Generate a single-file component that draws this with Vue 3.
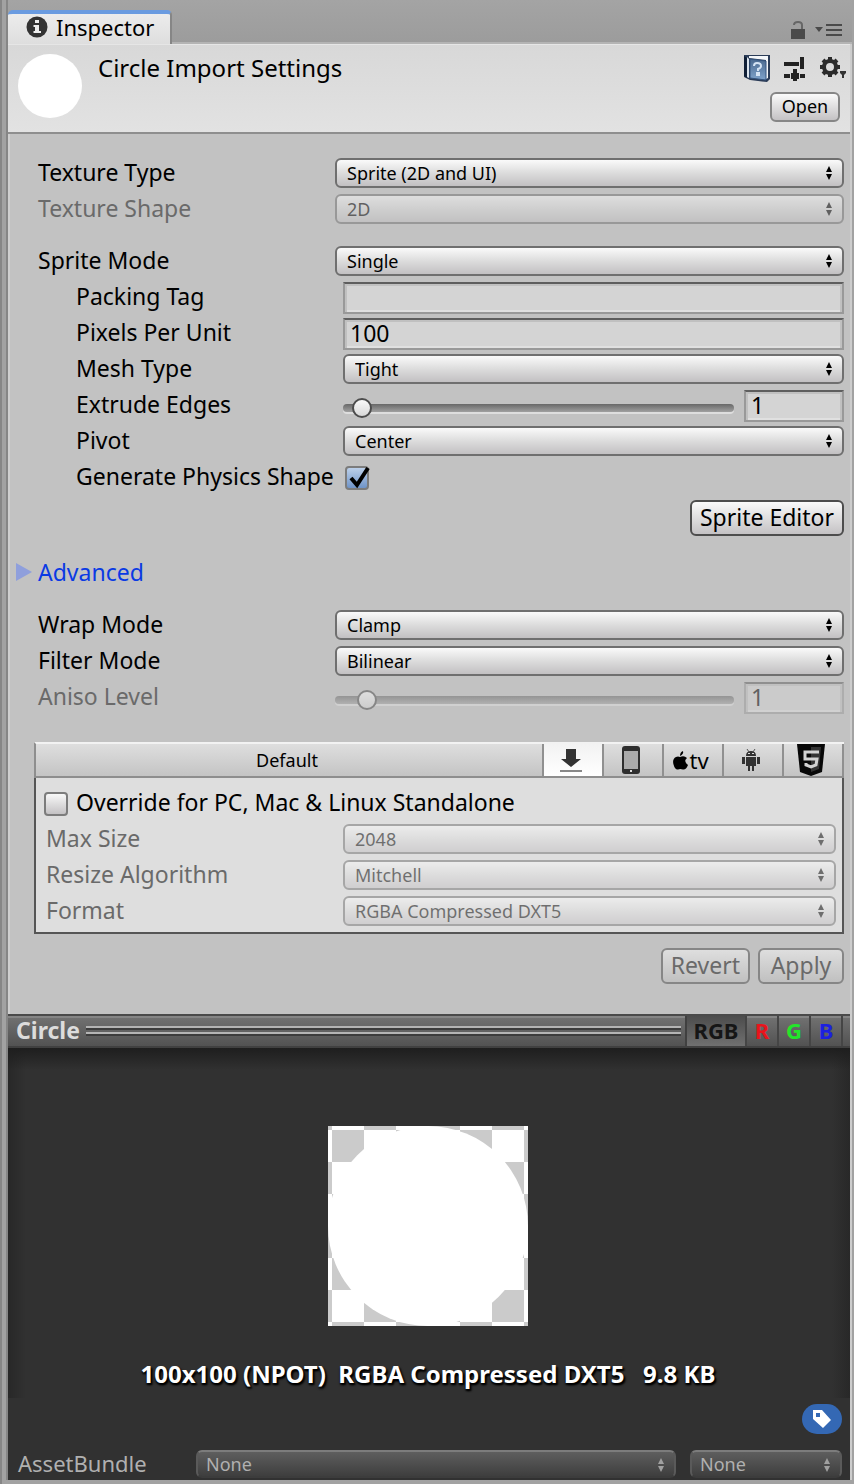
<script setup>
import { reactive, ref } from 'vue'

const groups = reactive([
  [
    { id: 'texture-type', label: 'Texture Type', kind: 'select', value: 'Sprite (2D and UI)' },
    { id: 'texture-shape', label: 'Texture Shape', kind: 'select', value: '2D', disabled: true },
  ],
  [
    { id: 'sprite-mode', label: 'Sprite Mode', kind: 'select', value: 'Single' },
    { id: 'packing-tag', label: 'Packing Tag', kind: 'text', value: '', sub: true },
    { id: 'pixels-per-unit', label: 'Pixels Per Unit', kind: 'text', value: '100', sub: true },
    { id: 'mesh-type', label: 'Mesh Type', kind: 'select', value: 'Tight', sub: true },
    { id: 'extrude-edges', label: 'Extrude Edges', kind: 'slider', value: 1, max: 42, sub: true },
    { id: 'pivot', label: 'Pivot', kind: 'select', value: 'Center', sub: true },
    { id: 'physics-shape', label: 'Generate Physics Shape', kind: 'check', value: true, sub: true },
  ],
])

const sampling = reactive([
  { id: 'wrap-mode', label: 'Wrap Mode', kind: 'select', value: 'Clamp' },
  { id: 'filter-mode', label: 'Filter Mode', kind: 'select', value: 'Bilinear' },
  { id: 'aniso-level', label: 'Aniso Level', kind: 'slider', value: 1, max: 17, disabled: true },
])

const sections = [
  { name: 'texture', rows: groups[0] },
  { name: 'sprite', rows: groups[1] },
  { name: 'sampling', rows: sampling },
]

const platformRows = [
  { id: 'max-size', label: 'Max Size', value: '2048' },
  { id: 'resize', label: 'Resize Algorithm', value: 'Mitchell' },
  { id: 'format', label: 'Format', value: 'RGBA Compressed DXT5' },
]

const channels = ['RGB', 'R', 'G', 'B']
const channel = ref('RGB')
const override = ref(false)
</script>

<template>
  <div class="window">
    <main class="panel">
      <div class="tabbar">
        <button class="tab" type="button">
          <svg width="22" height="22" viewBox="0 0 22 22" aria-hidden="true">
            <circle cx="11" cy="11" r="10.5" fill="#333" />
            <path d="M9 4h4v3H9zM7.500 9H13v6h2v2H7.500v-2H9v-4H7.500z" fill="#eee" />
          </svg>
          <span>Inspector</span>
        </button>
        <div class="tabtools">
          <button class="plain" type="button" aria-label="Lock">
            <svg width="14" height="20" viewBox="0 0 14 20">
              <path d="M0 9h14v10H0z" fill="#4a4a4a" />
              <path d="M3 5Q3 2 7 2t4 3v4" fill="none" stroke="#666" stroke-width="2" />
            </svg>
          </button>
          <button class="plain" type="button" aria-label="Menu">
            <svg width="28" height="14" viewBox="0 0 28 14">
              <path d="M1 4h8L5 9z" fill="#4a4a4a" />
              <path d="M12 2h16M12 7h16M12 12h16" stroke="#4a4a4a" stroke-width="2" />
            </svg>
          </button>
        </div>
      </div>

      <header class="head">
        <div class="thumb"></div>
        <h1>Circle Import Settings</h1>
        <div class="headside">
          <div class="headicons">
            <button class="plain" type="button" aria-label="Help">
              <svg width="28" height="28" viewBox="0 0 28 28">
                <defs>
                  <linearGradient id="cover" x1="0" y1="0" x2="0" y2="1">
                    <stop offset="0" stop-color="#4a698f" />
                    <stop offset="1" stop-color="#7fa3cb" />
                  </linearGradient>
                </defs>
                <path d="M1 1h26v24l-3 3L7 26l-6-3z" fill="#2b3c57" />
                <path d="M6 2h19v22l-2 1V6L6 4z" fill="#f4f7fa" />
                <path d="M1 2l3 2v20l-3-2z" fill="#101f36" />
                <path d="M4 3l2 2v19l-2-1z" fill="#dbe4ee" />
                <path d="M7 5l16 2v19L7 24z" fill="url(#cover)" stroke="#35557f" />
                <path d="M11 12q0-3 3-3 4 0 4 3 0 2-3 3v2M14 19h2v2h-2z" fill="none" stroke="#d4e3f4" stroke-width="2" />
              </svg>
            </button>
            <button class="plain" type="button" aria-label="Presets">
              <svg width="22" height="26" viewBox="0 0 22 26">
                <path d="M0 9h15M0 21h6M16 21h5" stroke="#222" stroke-width="4" />
                <path d="M18 2v12M11 14v12" stroke="#222" stroke-width="4" />
                <path d="M7 21h8" stroke="#222" stroke-width="6" />
              </svg>
            </button>
            <button class="plain" type="button" aria-label="Options">
              <svg width="28" height="26" viewBox="0 0 28 26">
                <circle cx="11" cy="12" r="6" fill="none" stroke="#2b2b2b" stroke-width="4" />
                <path d="M11 2v4M11 18v4M1 12h4M17 12h4M4 5l3 3M15 16l3 3M18 5l-3 3M4 19l3-3" stroke="#2b2b2b" stroke-width="4" />
                <path d="M21 16h6v2l-2 2v3h-2v-3l-2-2z" fill="#333" />
              </svg>
            </button>
          </div>
          <button class="btn small" type="button">Open</button>
        </div>
      </header>

      <form class="body" @submit.prevent>
        <template v-for="section in sections" :key="section.name">
          <div v-if="section.name === 'sampling'" class="sprite-actions">
            <button class="btn strong" type="button">Sprite Editor</button>
          </div>
          <button v-if="section.name === 'sampling'" class="foldout" type="button" aria-expanded="false">
            <svg width="16" height="18" viewBox="0 0 16 18" aria-hidden="true"><path d="M0 0l16 9-16 9z" fill="#8f9fdc" /></svg>
            Advanced
          </button>
          <section class="section">
            <div v-for="row in section.rows" :key="row.id" class="row" :class="{ sub: row.sub, off: row.disabled }">
              <label :for="row.id">{{ row.label }}</label>
              <div v-if="row.kind === 'select'" class="pick">
                <select :id="row.id" :disabled="row.disabled"><option>{{ row.value }}</option></select>
                <svg width="8" height="14" viewBox="0 0 8 14" aria-hidden="true"><path d="M4 0l3 6H1zM4 14l3-6H1z" /></svg>
              </div>
              <input v-else-if="row.kind === 'text'" :id="row.id" v-model="row.value" class="field" type="text">
              <div v-else-if="row.kind === 'slider'" class="slide">
                <input :id="row.id" v-model="row.value" type="range" min="0" :max="row.max" :disabled="row.disabled">
                <input v-model="row.value" class="field number" type="text" :aria-label="row.label + ' value'" :disabled="row.disabled">
              </div>
              <span v-else class="check">
                <input :id="row.id" v-model="row.value" type="checkbox">
                <svg v-if="row.value" width="26" height="26" viewBox="0 0 26 26" aria-hidden="true"><path d="M6 12l6 7L23 2" fill="none" stroke="#000" stroke-width="4" /></svg>
              </span>
            </div>
          </section>
        </template>

        <section class="platforms">
          <div class="ptabs">
            <button class="ptab default" type="button">Default</button>
            <button class="ptab active" type="button" aria-label="Standalone">
              <svg width="24" height="26" viewBox="0 0 24 26">
                <path d="M7 2h10v10h5L12 20 2 12h5z" fill="#333" />
                <path d="M1 24h22" stroke="#888" stroke-width="2" />
              </svg>
            </button>
            <button class="ptab" type="button" aria-label="iOS">
              <svg width="18" height="28" viewBox="0 0 18 28">
                <rect width="18" height="28" rx="3" fill="#2e2e2e" />
                <path d="M2 5h14v18H2z" fill="#aaa" />
                <path d="M8 24h2v2H8z" fill="#ddd" />
              </svg>
            </button>
            <button class="ptab tv" type="button" aria-label="Apple TV">
              <svg width="15" height="19" viewBox="0 0 15 19">
                <path d="M7 5Q7 1 10 0q1 3-3 5z" />
                <path d="M7 6q4-2 7 1-4 3 1 7-2 5-5 4.500-3-1-5 0-3 .5-4.500-5Q-1 8 3 6q2-1 4 0z" />
              </svg>
              <span>tv</span>
            </button>
            <button class="ptab" type="button" aria-label="Android">
              <svg width="18" height="22" viewBox="0 0 18 22">
                <path d="M4 7q0-5 5-5t5 5zM4 8h10v9H4zM0 8h3v7H0zM15 8h3v7h-3zM6 17h2v5H6zM10 17h2v5h-2z" fill="#333" />
                <path d="M5 0l2 3M13 0l-2 3" stroke="#555" />
                <path d="M6 4h2v1H6zM10 4h2v1h-2z" fill="#ddd" />
              </svg>
            </button>
            <button class="ptab" type="button" aria-label="WebGL">
              <svg width="28" height="32" viewBox="0 0 28 32">
                <path d="M0 0h28l-3 28-11 4L3 28z" fill="#080808" />
                <path d="M14 3h10l-2 22-8 3z" fill="#333" />
                <path d="M22 8H8v7h12l-1 6-5 2-5-2v-2" fill="none" stroke="#d2d2d2" stroke-width="3" />
              </svg>
            </button>
          </div>
          <div class="pbox">
            <div class="override">
              <span class="check">
                <input id="override" v-model="override" type="checkbox">
              </span>
              <label for="override">Override for PC, Mac &amp; Linux Standalone</label>
            </div>
            <div v-for="row in platformRows" :key="row.id" class="row off">
              <label :for="row.id">{{ row.label }}</label>
              <div class="pick">
                <select :id="row.id" disabled><option>{{ row.value }}</option></select>
                <svg width="8" height="14" viewBox="0 0 8 14" aria-hidden="true"><path d="M4 0l3 6H1zM4 14l3-6H1z" /></svg>
              </div>
            </div>
          </div>
        </section>

        <div class="actions">
          <button class="btn" type="button" disabled>Revert</button>
          <button class="btn" type="button" disabled>Apply</button>
        </div>
      </form>

      <section class="preview">
        <div class="pbar">
          <h2>Circle</h2>
          <div class="grip"><i></i><i></i></div>
          <div class="channels">
            <button
              v-for="c in channels"
              :key="c"
              type="button"
              :class="['ch', 'ch-' + c.toLowerCase(), { on: channel === c }]"
              @click="channel = c"
            >{{ c }}</button>
          </div>
        </div>
        <div class="stage">
          <svg width="200" height="200" viewBox="0 0 200 200" role="img" aria-label="Circle texture">
            <defs>
              <pattern id="checker" x="4" y="4" width="64" height="64" patternUnits="userSpaceOnUse">
                <path d="M0 0h64v64H0z" fill="#fff" />
                <path d="M0 0h32v32H0zM32 32h32v32H32z" fill="#cbcbcb" />
              </pattern>
            </defs>
            <rect width="200" height="200" fill="url(#checker)" />
            <circle cx="100" cy="100" r="100" fill="#fff" />
          </svg>
          <p>100x100 (NPOT)&nbsp; RGBA Compressed DXT5&nbsp;&nbsp; 9.8 KB</p>
        </div>
        <footer class="foot">
          <button class="tag" type="button" aria-label="Labels">
            <svg width="20" height="20" viewBox="0 0 20 20"><path fill-rule="evenodd" d="M1 1h9l9 10-8 8-10-9zM4 4v4h4V4z" fill="#fff" /></svg>
          </button>
          <div class="bundle">
            <label for="bundle">AssetBundle</label>
            <div class="pick dark">
              <select id="bundle"><option>None</option></select>
              <svg width="8" height="14" viewBox="0 0 8 14" aria-hidden="true"><path d="M4 0l3 6H1zM4 14l3-6H1z" /></svg>
            </div>
            <div class="pick dark variant">
              <select aria-label="AssetBundle variant"><option>None</option></select>
              <svg width="8" height="14" viewBox="0 0 8 14" aria-hidden="true"><path d="M4 0l3 6H1zM4 14l3-6H1z" /></svg>
            </div>
          </div>
        </footer>
      </section>
    </main>
  </div>
</template>

<style>
body {
  margin: 0;
  background: #a2a2a2;
}
</style>

<style scoped>
* {
  box-sizing: border-box;
}
.window {
  font-family: "Lucida Grande", "Noto Sans", "Open Sans", sans-serif;
  font-size: 23px;
  line-height: 28px;
  color: #000;
  background: linear-gradient(90deg, #868686 2px, #a2a2a2 2px);
  padding: 0 2px 4px 6px;
}
.panel {
  border-left: 2px solid #868686;
  border-right: 2px solid #cdcdcd;
  background: #c2c2c2;
  min-height: 1480px;
  display: flex;
  flex-direction: column;
}
button,
input,
select {
  font: inherit;
  color: inherit;
  margin: 0;
}
h1,
h2,
p {
  margin: 0;
}
svg {
  display: block;
  flex: none;
}
.plain {
  border: 0;
  padding: 0;
  background: none;
}

.tabbar {
  height: 44px;
  margin-right: -2px;
  background: linear-gradient(#a4a4a4, #9c9c9c);
  border-bottom: 2px solid #b4b4b4;
  display: flex;
  align-items: flex-end;
  justify-content: space-between;
}
.tab {
  height: 34px;
  margin-bottom: -2px;
  padding: 0 16px 4px 18px;
  border: 0;
  border-top: 4px solid #6a9be0;
  border-right: 2px solid #868686;
  border-radius: 5px 5px 0 0;
  background: linear-gradient(#ececec, #dedede);
  display: flex;
  align-items: center;
  gap: 8px;
  font-size: 22px;
  line-height: 26px;
}
.tabtools {
  display: flex;
  align-items: center;
  gap: 9px;
  padding: 0 10px 2px 0;
}

.head {
  height: 90px;
  background: linear-gradient(#d8d8d8, #e2e2e2);
  border-top: 1px solid #e6e6e6;
  border-bottom: 2px solid #8e8e8e;
  display: flex;
  padding: 9px 0 0 10px;
}
.thumb {
  width: 64px;
  height: 64px;
  border-radius: 50%;
  background: #fff;
  flex: none;
}
h1 {
  flex: 1;
  margin-left: 16px;
  font-size: 24px;
  font-weight: 400;
}
.headside {
  display: flex;
  flex-direction: column;
  align-items: flex-end;
  padding-right: 3px;
}
.headicons {
  display: flex;
  gap: 13px;
  height: 38px;
}
.headicons .plain {
  height: 28px;
}

.btn {
  height: 36px;
  min-width: 86px;
  padding: 0 8px;
  border: 2px solid #868686;
  border-radius: 6px;
  background: linear-gradient(#fafafa, #c4c2c4);
  line-height: 28px;
  padding-bottom: 3px;
}
.btn.small {
  height: 30px;
  min-width: 70px;
  margin-right: 7px;
  font-size: 18px;
  line-height: 24px;
}
.btn.strong {
  border-color: #4d4d4d;
}
.btn:disabled {
  color: #6a6a6a;
  background: linear-gradient(#dedede, #c0c0c0);
}

.body {
  flex: 1;
  padding: 24px 6px 30px 0;
  border-left: 2px solid #cfcfcf;
}
.section + .section {
  margin-top: 16px;
}
.row {
  display: flex;
  height: 36px;
}
.row > label {
  flex: 0 0 325px;
  padding-left: 28px;
  white-space: nowrap;
}
.row.sub > label {
  flex-basis: 333px;
  padding-left: 66px;
}
.row.off > label {
  color: #6a6a6a;
}
.pick {
  flex: 1;
  position: relative;
  height: 30px;
}
.pick select {
  appearance: none;
  display: block;
  width: 100%;
  height: 30px;
  padding: 0 30px 0 10px;
  border: 2px solid #6f6f6f;
  border-radius: 6px;
  background: linear-gradient(#fafafa, #dcdcdc 50%, #c2c0c2);
  font-size: 18px;
  line-height: 26px;
}
.pick svg {
  position: absolute;
  right: 11px;
  top: 8px;
  pointer-events: none;
}
.row.off .pick,
.row.off .slide {
  opacity: 0.5;
}
.pick select:disabled {
  color: #000;
  opacity: 1;
}
.field {
  flex: 1;
  width: 100%;
  height: 32px;
  padding: 0 6px 3px 5px;
  border: 2px solid #999;
  border-top-color: #5e5e5e;
  border-radius: 0;
  background: #d4d4d4;
  box-shadow: inset 0 2px #c0c0c0, inset 2px 0 #c0c0c0, inset -2px 0 #c0c0c0, inset 0 -2px #e0e0e0;
}
.field:disabled {
  color: #000;
}
.field.number {
  flex: 0 0 100px;
}
.slide {
  flex: 1;
  display: flex;
  gap: 10px;
}
.slide input[type='range'] {
  appearance: none;
  flex: 1;
  min-width: 0;
  height: 36px;
  background: none;
}
.slide input[type='range']::-webkit-slider-runnable-track {
  height: 8px;
  border-radius: 4px;
  background: linear-gradient(#686868, #a0a0a0);
  box-shadow: 0 2px #dedede;
}
.slide input[type='range']::-webkit-slider-thumb {
  appearance: none;
  width: 20px;
  height: 20px;
  margin-top: -6px;
  border: 2px solid #4c4c4c;
  border-radius: 50%;
  background: linear-gradient(#fafafa, #d8d8d8);
}
.check {
  position: relative;
  display: block;
  width: 24px;
  height: 24px;
}
.check input {
  appearance: none;
  display: block;
  width: 24px;
  height: 24px;
  border: 2px solid #7c7c7c;
  border-radius: 4px;
  background: linear-gradient(#f8f8f8, #c4c2c4);
}
.check input:checked {
  background: linear-gradient(#bcd0ea, #6f94c8);
}
.check svg {
  position: absolute;
  left: 0;
  top: 0;
  pointer-events: none;
}
.row .check {
  margin: 4px 2px;
}
.sprite-actions {
  display: flex;
  justify-content: flex-end;
  margin-top: 2px;
}
.foldout {
  display: flex;
  align-items: center;
  gap: 6px;
  margin: 22px 0;
  padding: 0 0 2px 6px;
  border: 0;
  background: none;
  color: #0a3ae4;
}

.platforms {
  margin: 24px 0 0 24px;
}
.ptabs {
  display: flex;
  height: 36px;
  border-top: 2px solid #f2f2f2;
  border-bottom: 2px solid #8e8e8e;
  border-left: 2px solid #8e8e8e;
}
.ptab {
  width: 60px;
  padding: 0 4px 0 0;
  border: 0;
  border-right: 2px solid #909090;
  background: linear-gradient(#dedede, #c4c4c4);
  display: flex;
  align-items: center;
  justify-content: center;
  font-size: 18px;
  line-height: 24px;
}
.ptab.default {
  flex: 1;
}
.ptab.active {
  background: linear-gradient(#f2f2f2, #fff);
}
.ptab.tv {
  gap: 1px;
  font-size: 22px;
}
.pbox {
  border: 2px solid #555;
  border-top: 0;
  background: #dedede;
  padding: 10px 6px 0 0;
}
.pbox .row > label {
  flex-basis: 307px;
  padding-left: 10px;
}
.override {
  display: flex;
  gap: 8px;
  height: 36px;
  padding-left: 8px;
}
.override .check {
  margin-top: 4px;
}
.actions {
  display: flex;
  justify-content: flex-end;
  gap: 8px;
  margin-top: 14px;
}

.preview {
  background: #313131;
}
.pbar {
  height: 34px;
  border-top: 2px solid #4a4a4a;
  border-bottom: 2px solid #404040;
  background: linear-gradient(#858585 2px, #707070 2px, #525252);
  display: flex;
  align-items: stretch;
}
h2 {
  padding-left: 8px;
  font-size: 23px;
  font-weight: 700;
  color: #dcdcdc;
}
.grip {
  flex: 1;
  margin: 0 4px 0 6px;
  display: flex;
  flex-direction: column;
  justify-content: center;
  gap: 2px;
}
.grip i {
  height: 4px;
  border-top: 2px solid #b4b4b4;
  border-bottom: 2px solid #3c3c3c;
}
.channels {
  display: flex;
  padding-right: 7px;
  border-left: 2px solid #404040;
}
.ch {
  width: 32px;
  padding: 0 0 2px;
  border: 0;
  border-right: 2px solid #454545;
  background: none;
  font-size: 22px;
  font-weight: 700;
}
.ch-rgb {
  width: 60px;
  color: #161616;
}
.ch.on {
  background: linear-gradient(#4c4c4c, #707070);
}
.ch-r {
  color: #e8141c;
}
.ch-g {
  color: #22e62a;
}
.ch-b {
  color: #1c20e0;
}
.stage {
  height: 350px;
  padding: 78px 2px 0 0;
  background:
    linear-gradient(#1e1e1e, transparent 22px),
    linear-gradient(90deg, #282828, transparent 18px),
    linear-gradient(270deg, #282828, transparent 18px);
  display: flex;
  flex-direction: column;
  align-items: center;
}
.stage p {
  margin-top: 34px;
  color: #fff;
  font-size: 24px;
  font-weight: 700;
  white-space: nowrap;
  text-shadow: 0 2px 2px #000, 2px 2px 2px #000;
}
.foot {
  display: flex;
  flex-direction: column;
  padding: 6px 8px 2px 10px;
  gap: 16px;
}
.tag {
  align-self: flex-end;
  width: 40px;
  height: 30px;
  padding: 0;
  border: 0;
  border-radius: 15px;
  background: #3468b4;
  display: flex;
  align-items: center;
  justify-content: center;
}
.bundle {
  display: flex;
  color: #b0b0b0;
  font-size: 22px;
  line-height: 26px;
}
.bundle label {
  flex: 0 0 178px;
}
.pick.dark,
.pick.dark select {
  height: 28px;
}
.pick.dark select {
  border: 2px solid #5a5a5a;
  border-top-color: #7c7c7c;
  border-bottom-color: #3c3c3c;
  background: linear-gradient(#5e5e5e, #3e3e3e);
  line-height: 24px;
  padding-left: 8px;
}
.pick.dark svg {
  fill: #a0a0a0;
}
.pick.variant {
  flex: 0 0 152px;
  margin-left: 14px;
}
</style>
